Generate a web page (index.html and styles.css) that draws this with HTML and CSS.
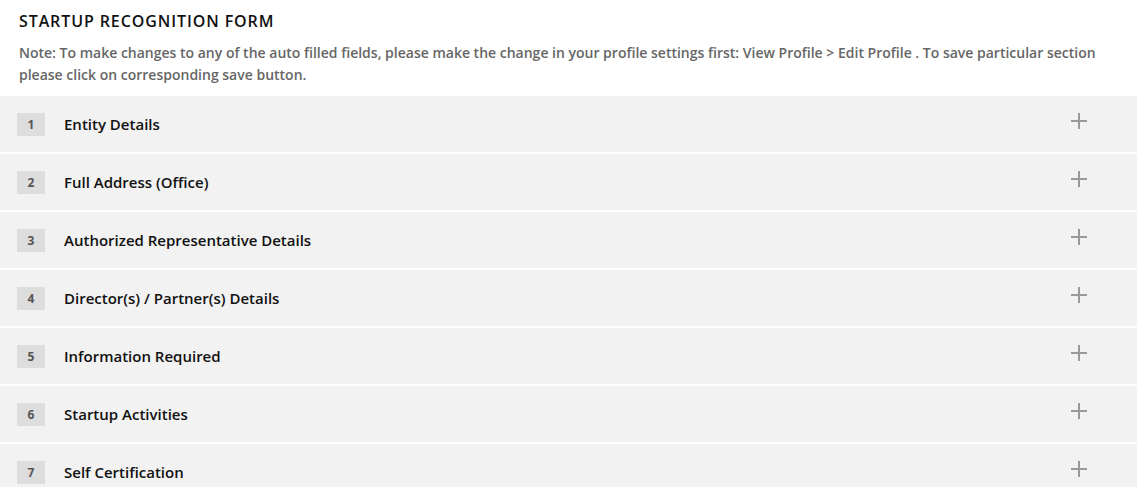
FILE: index.html
```html
<!DOCTYPE html>
<html>
<head>
<meta charset="utf-8">
<link rel="stylesheet" href="styles.css">
</head>
<body>
<div class="page">
  <header class="head">
    <h1 class="title">STARTUP RECOGNITION FORM</h1>
    <p class="note">Note: To make changes to any of the auto filled fields, please make the change in your profile settings first: View Profile &gt; Edit Profile . To save particular section please click on corresponding save button.</p>
  </header>
  <div class="sections">
    <div class="row"><span class="num">1</span><span class="label">Entity Details</span><span class="plus"></span></div>
    <div class="row"><span class="num">2</span><span class="label">Full Address (Office)</span><span class="plus"></span></div>
    <div class="row"><span class="num">3</span><span class="label">Authorized Representative Details</span><span class="plus"></span></div>
    <div class="row"><span class="num">4</span><span class="label">Director(s) / Partner(s) Details</span><span class="plus"></span></div>
    <div class="row"><span class="num">5</span><span class="label">Information Required</span><span class="plus"></span></div>
    <div class="row"><span class="num">6</span><span class="label">Startup Activities</span><span class="plus"></span></div>
    <div class="row"><span class="num">7</span><span class="label">Self Certification</span><span class="plus"></span></div>
  </div>
</div>
</body>
</html>
```
FILE: styles.css
```css
html, body { margin: 0; padding: 0; background: #fff; }
body { font-family: "Open Sans", "Liberation Sans", sans-serif; color: #111; }
.head { padding: 10px 19px 0 19px; height: 96px; box-sizing: border-box; }
.title { margin: 0; font-size: 16px; font-weight: 600; line-height: 22px; color: #111; letter-spacing: 0.9px; }
.note { margin: 10px 0 0 0; font-size: 14px; font-weight: 600; line-height: 22px; color: #666; padding-right: 20px; }
.sections { display: flex; flex-direction: column; gap: 2px; }
.row { height: 56px; background: #f2f2f2; display: flex; align-items: center; padding: 0 50px 0 17px; }
.num { width: 28px; height: 23px; background: #ddd; color: #555; font-size: 12px; font-weight: 700; display: flex; align-items: center; justify-content: center; }
.label { margin-left: 19px; font-size: 15px; font-weight: 600; color: #111; flex: 1; }
.plus { width: 16px; height: 16px; position: relative; margin-top: -6px; }
.plus::before, .plus::after { content: ""; position: absolute; background: #999; }
.plus::before { left: 0; right: 0; top: 7px; height: 2px; }
.plus::after { top: 0; bottom: 0; left: 7px; width: 2px; }
```
